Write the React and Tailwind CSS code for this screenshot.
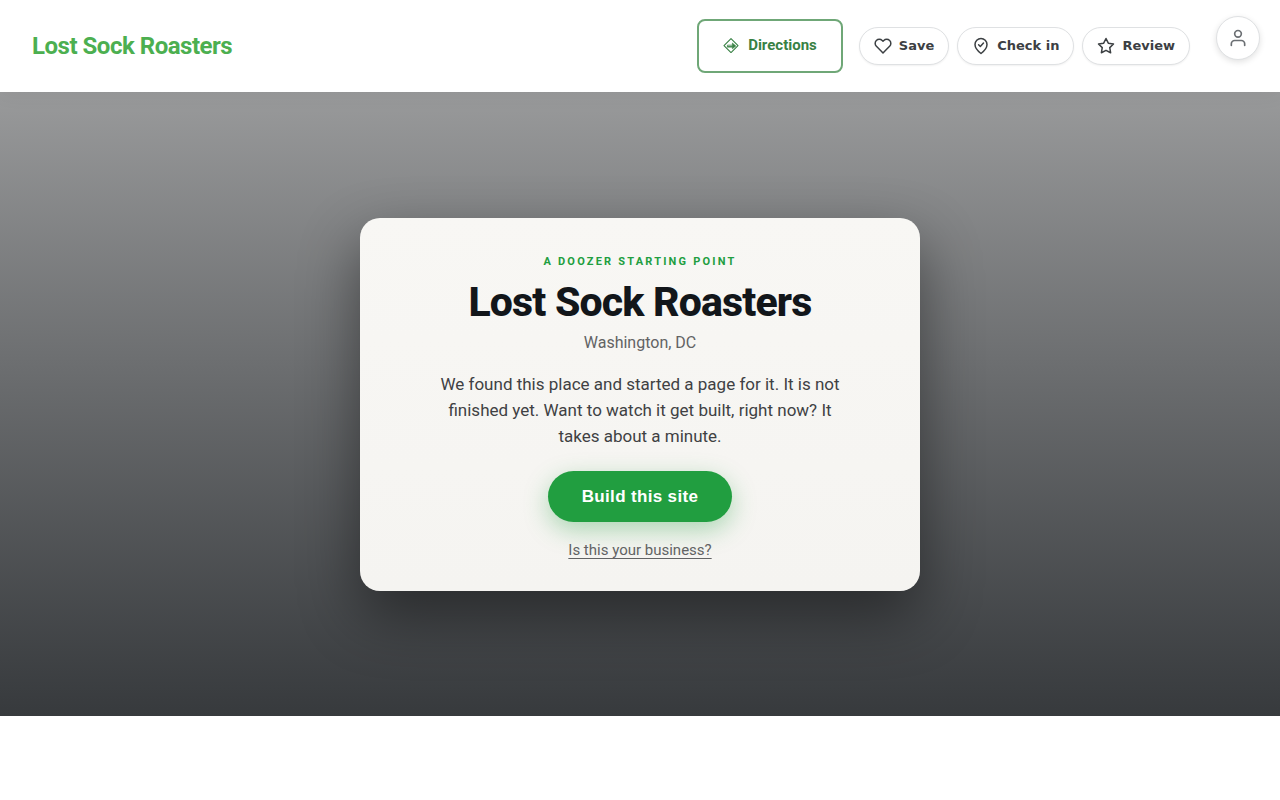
import { FiHeart, FiStar, FiUser } from "react-icons/fi";

function CheckInIcon({ className }) {
  return (
    <svg
      viewBox="0 0 24 24"
      className={className}
      fill="none"
      stroke="currentColor"
      strokeWidth="2"
      strokeLinecap="round"
      strokeLinejoin="round"
      aria-hidden="true"
    >
      <path d="M12 22s8-6.2 8-12a8 8 0 1 0-16 0c0 5.8 8 12 8 12z" />
      <path d="m8.8 10.4 2.3 2.3 4.2-4.6" />
    </svg>
  );
}

const actions = [
  { label: "Save", Icon: FiHeart },
  { label: "Check in", Icon: CheckInIcon },
  { label: "Review", Icon: FiStar },
];

function DirectionsIcon() {
  return (
    <svg viewBox="0 0 16 16" className="size-4" fill="none" stroke="currentColor" aria-hidden="true">
      <path d="M8 1.6 15 8.6 8 15.6 1 8.6Z" strokeWidth="1.1" strokeLinejoin="round" />
      <path d="M4.4 9.8V8.2H9.4" strokeWidth="0.8" />
      <path d="M4.2 9.8H9.6" strokeWidth="1.4" />
      <path d="M9.4 6 12.8 9 9.4 11.8Z" strokeWidth="0.6" fill="currentColor" />
    </svg>
  );
}

export default function App() {
  return (
    <div className="min-h-screen bg-white font-['Roboto',sans-serif]">
      <header className="relative z-10 flex items-start justify-between bg-white pr-5 pl-8 shadow-[0_2px_20px_rgba(0,0,0,0.05)]">
        <a href="#" className="flex h-[92px] items-center text-2xl font-bold tracking-[-0.02em] text-[#4caf50]">
          Lost Sock Roasters
        </a>
        <div className="flex items-start">
          <div className="flex h-[92px] items-center gap-2">
            <a
              href="#directions"
              className="mr-2 flex h-[54px] items-center gap-[9px] rounded-lg border-2 border-[#6fa777] px-6 pb-0.5 text-[15px] font-bold text-[#388144]"
            >
              <DirectionsIcon />
              Directions
            </a>
            {actions.map(({ label, Icon }) => (
              <button
                key={label}
                type="button"
                className="flex h-[38px] items-center gap-[7px] rounded-full border border-[#dfe1e3] bg-white px-3.5 font-['DejaVu_Sans',sans-serif] text-[13px] font-semibold text-[#3c4043] shadow-[0_1px_2px_rgba(0,0,0,0.06)]"
              >
                <Icon className="size-[18px]" aria-hidden="true" />
                {label}
              </button>
            ))}
          </div>
          <button
            type="button"
            aria-label="Account"
            className="mt-4 ml-[26px] flex size-11 items-center justify-center rounded-full border border-[#dfe1e3] bg-white text-[#6b6f73] shadow-[0_2px_6px_rgba(0,0,0,0.12)]"
          >
            <FiUser className="size-5" aria-hidden="true" />
          </button>
        </div>
      </header>
      <main className="flex min-h-[78vh] items-center justify-center bg-linear-to-b from-[#999a9b] to-[#373a3d] px-6 py-16">
        <section className="flex w-full max-w-[560px] flex-col items-center rounded-[20px] bg-linear-to-b from-[#f8f7f4] to-[#f5f4f1] px-10 pt-9 pb-[31px] text-center shadow-[0_24px_60px_rgba(0,0,0,0.45)]">
          <p className="text-[11px] leading-4 font-bold tracking-[0.2em] text-[#219e40] uppercase">
            A Doozer starting point
          </p>
          <h1 className="mt-[7px] text-[41px] leading-[50px] font-extrabold tracking-[-0.02em] text-[#12161a]">
            Lost Sock Roasters
          </h1>
          <p className="mt-1 text-base text-[#626364]">Washington, DC</p>
          <p className="mt-4 max-w-[400px] text-[17px] leading-[26px] text-[#3f4143]">
            We found this place and started a page for it. It is not finished yet. Want to watch it get built, right now? It takes about a minute.
          </p>
          <button
            type="button"
            className="mt-[22px] h-[51px] rounded-full bg-[#219e40] px-[34px] pt-px font-['Liberation_Sans',sans-serif] text-[17px] font-bold tracking-[0.02em] text-white shadow-[0_8px_24px_rgba(33,158,64,0.35)]"
          >
            Build this site
          </button>
          <a href="#claim" className="mt-[18px] text-[15px] leading-5 text-[#626364] underline underline-offset-[3px] [text-decoration-skip-ink:none]">
            Is this your business?
          </a>
        </section>
      </main>
    </div>
  );
}
